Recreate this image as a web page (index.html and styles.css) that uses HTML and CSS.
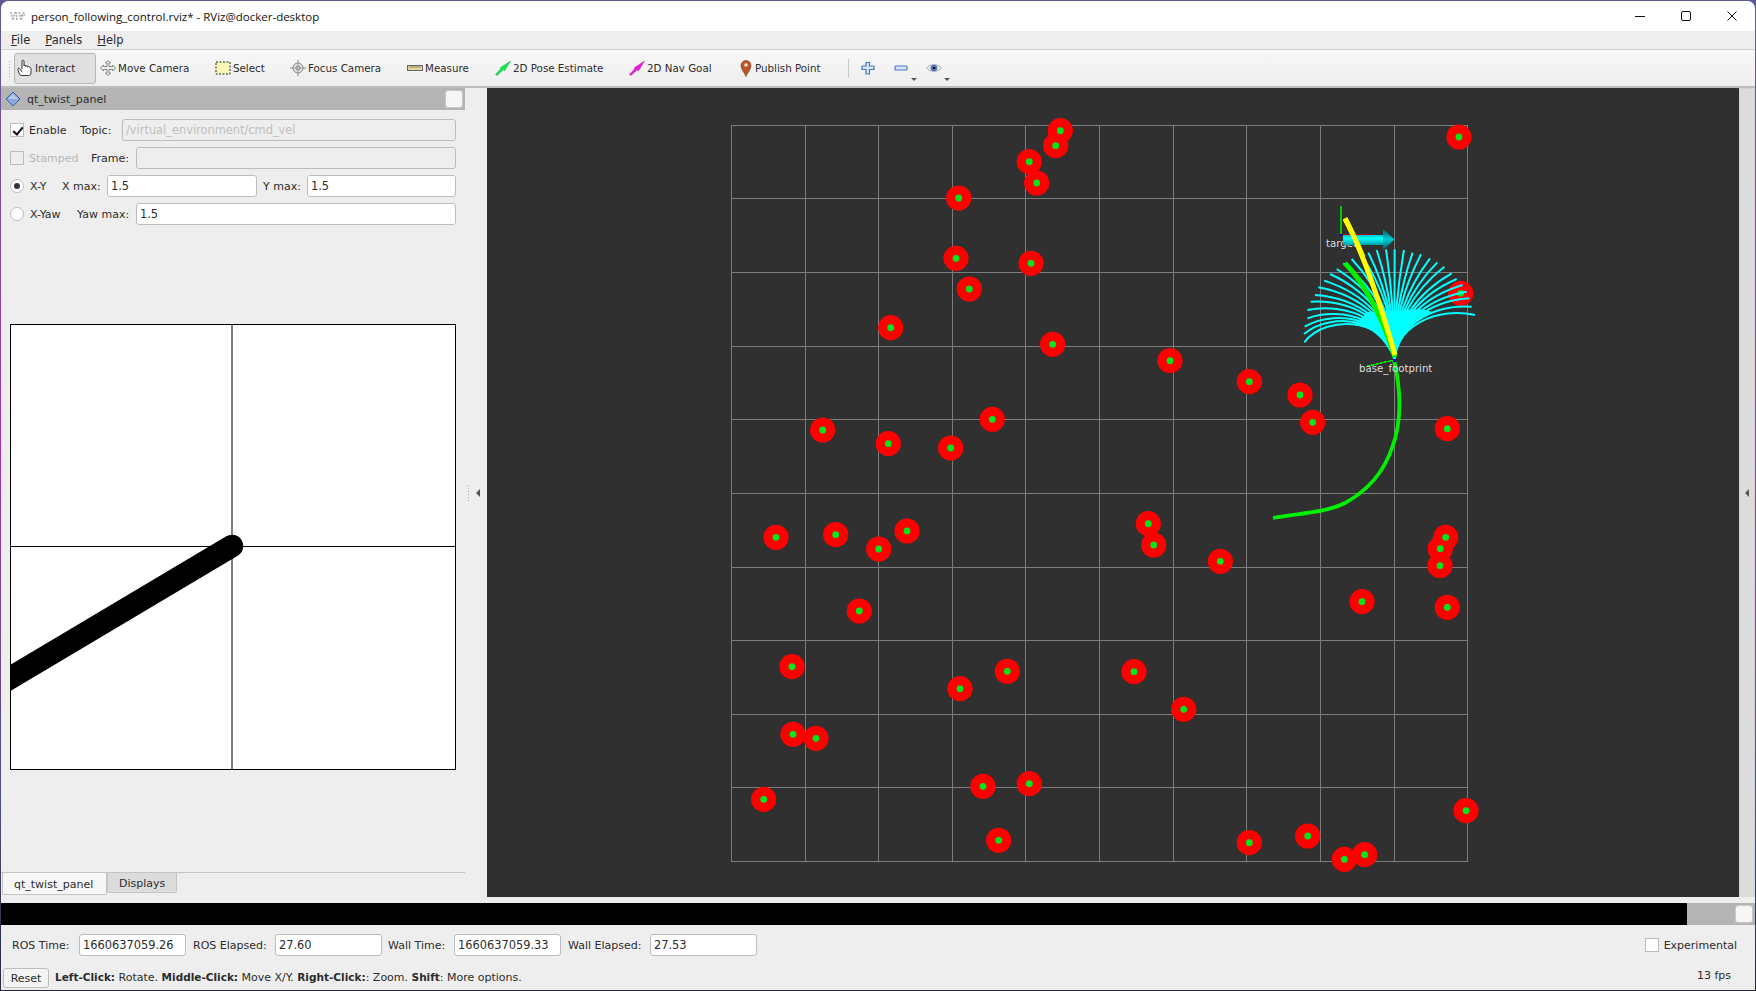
FILE: index.html
```html
<!DOCTYPE html>
<html lang="en">

<head>
    <meta charset="UTF-8">
    <title>person_following_control.rviz* - RViz@docker-desktop</title>
    <link rel="stylesheet" href="styles.css">
</head>

<body>
    <div class="window">
        <div class="titlebar">
            <svg class="app-icon" width="16" height="12" viewBox="0 0 16 12">
                <path d="M1 2l2 8 2-8M6 2l1 8M9 2l2 8 3-8M11 5h4" fill="none" stroke="#aaa" stroke-width="1.6" stroke-dasharray="2 1" />
            </svg>
            <span class="title-text">person_following_control.rviz* - RViz@docker-desktop</span>
            <div class="win-btns">
                <div class="win-btn"><svg width="12" height="12" viewBox="0 0 12 12"><path d="M1 6.5h10" stroke="#111" /></svg></div>
                <div class="win-btn"><svg width="12" height="12" viewBox="0 0 12 12"><rect x="1.5" y="1.5" width="9" height="9" rx="1.5" fill="none" stroke="#111" /></svg></div>
                <div class="win-btn"><svg width="12" height="12" viewBox="0 0 12 12"><path d="M1.5 1.5l9 9M10.5 1.5l-9 9" stroke="#111" /></svg></div>
            </div>
        </div>

        <div class="menubar">
            <span class="menu-item"><u>F</u>ile</span>
            <span class="menu-item"><u>P</u>anels</span>
            <span class="menu-item"><u>H</u>elp</span>
        </div>

        <div class="toolbar">
            <div class="grip"></div>
            <div class="tool tool-interact active">
                <svg width="16" height="18" viewBox="0 0 16 18"><path d="M5 10V2.2c0-1.4 2-1.4 2 0V7c0-1 1.8-1 1.8 0v.6c0-1 1.8-1 1.8 0v.6c0-1 1.8-1 1.8 0 .5 0 1.600.2 1.600 1.200v4.600c0 1.500-1 2.500-2.500 2.500H5c-2 0-2.500-1-3-2.500L.8 10.500c-.3-1.200 1.400-1.800 2-.6L5 13" fill="#fff" stroke="#222" stroke-width=".9" /></svg>
                <span>Interact</span>
            </div>
            <div class="tool tool-move">
                <svg width="16" height="16" viewBox="0 0 16 16"><path d="M8 .5l2.500 2.500H9v3.500h3.500V5L15.500 8l-3 3V9.500H9V13h1.500L8 15.500 5.500 13H7V9.500H3.500V11L.5 8l3-3v1.500H7V3H5.500z" fill="#eee" stroke="#777" stroke-width=".9" /></svg>
                <span>Move Camera</span>
            </div>
            <div class="tool tool-select">
                <svg width="16" height="16" viewBox="0 0 16 16"><rect x="1" y="2" width="14" height="12" fill="#fbf8b8" stroke="#222" stroke-dasharray="2 1.500" /></svg>
                <span>Select</span>
            </div>
            <div class="tool tool-focus">
                <svg width="16" height="16" viewBox="0 0 16 16"><path d="M8 0v16M0 8h16" stroke="#888" /><circle cx="8" cy="8" r="5" fill="#ddd" stroke="#888" /><circle cx="8" cy="8" r="2" fill="none" stroke="#888" /><path d="M8 3v10M3 8h10" stroke="#999" stroke-width=".7" /></svg>
                <span>Focus Camera</span>
            </div>
            <div class="tool tool-measure">
                <svg width="16" height="16" viewBox="0 0 16 16"><rect x="0.500" y="5.500" width="15" height="5" fill="#e3d99a" stroke="#666" /><path d="M3 6v2M5 6v2M7 6v2M9 6v2M11 6v2M13 6v2" stroke="#777" stroke-width=".8" /></svg>
                <span>Measure</span>
            </div>
            <div class="tool tool-pose">
                <svg width="16" height="16" viewBox="0 0 16 16"><path d="M.5 14.500L6 8.500 5 8l10.500-7L9.500 11 8.500 9.500 2 15.500z" fill="#12e84e" stroke="#0a9c30" stroke-width=".4" /></svg>
                <span>2D Pose Estimate</span>
            </div>
            <div class="tool tool-nav">
                <svg width="16" height="16" viewBox="0 0 16 16"><path d="M.5 14.500L6 8.500 5 8l10.500-7L9.500 11 8.500 9.500 2 15.500z" fill="#f018d8" stroke="#b010a0" stroke-width=".4" /></svg>
                <span>2D Nav Goal</span>
            </div>
            <div class="tool tool-point">
                <svg width="14" height="17" viewBox="0 0 14 17"><path d="M7 16.500C5.500 12.500 2 9.500 2 5.500a5 5 0 0 1 10 0c0 4-3.500 7-5 11z" fill="#b8552a" stroke="#7a3a1e" stroke-width=".6" /><circle cx="7" cy="5" r="1.800" fill="#f4e3d6" /></svg>
                <span>Publish Point</span>
            </div>
            <div class="tool-sep"></div>
            <div class="tool tool-icon tool-plus">
                <svg width="14" height="14" viewBox="0 0 14 14"><path d="M5 1.500h3.500V5H13v3.500H8.500V13H5V8.500H1V5h4z" fill="#d6e4f6" stroke="#4a7ab8" stroke-width="1.200" /></svg>
            </div>
            <div class="tool tool-icon tool-minus">
                <svg width="14" height="14" viewBox="0 0 14 14"><rect x="1" y="5" width="12" height="4" rx="1" fill="#d6e4f6" stroke="#4a7ab8" stroke-width="1.200" /></svg>
                <i class="drop"></i>
            </div>
            <div class="tool tool-icon tool-eye">
                <svg width="16" height="12" viewBox="0 0 16 12"><path d="M.5 6C3 1.500 13 1.500 15.500 6 13 10.500 3 10.500.5 6z" fill="#e4e4ea" stroke="#9a9aa8" stroke-width=".7" /><circle cx="8" cy="6" r="3.300" fill="#5578b8" /><circle cx="8" cy="6" r="1.300" fill="#111" /></svg>
                <i class="drop"></i>
            </div>
        </div>

        <div class="main">
            <div class="sidebar">
                <div class="panel-title">
                    <svg width="16" height="16" viewBox="0 0 16 16"><path d="M8 1l7 7-7 7-7-7z" fill="#8fa8dc" stroke="#3d5fa8" /><path d="M8 3L3 8h10z" fill="#b6c8ee" /></svg>
                    <span class="panel-name">qt_twist_panel</span>
                    <div class="float-btn"></div>
                </div>

                <div class="form">
                    <div class="row">
                        <div class="opt opt-enable"><i class="check checked"></i><span>Enable</span></div>
                        <label class="lbl lbl-topic">Topic:</label>
                        <div class="field disabled">/virtual_environment/cmd_vel</div>
                    </div>
                    <div class="row">
                        <div class="opt opt-stamped muted"><i class="check"></i><span>Stamped</span></div>
                        <label class="lbl lbl-frame">Frame:</label>
                        <div class="field disabled"></div>
                    </div>
                    <div class="row">
                        <div class="opt opt-xy"><i class="radio selected"></i><span>X-Y</span></div>
                        <label class="lbl lbl-xmax">X max:</label>
                        <div class="field field-xmax">1.5</div>
                        <label class="lbl lbl-ymax">Y max:</label>
                        <div class="field">1.5</div>
                    </div>
                    <div class="row">
                        <div class="opt opt-yaw"><i class="radio"></i><span>X-Yaw</span></div>
                        <label class="lbl lbl-frame-yaw">Yaw max:</label>
                        <div class="field">1.5</div>
                    </div>
                </div>

                <svg class="twist" width="446" height="446" viewBox="0 0 446 446">
                    <rect width="446" height="446" fill="#fff" />
                    <path d="M222 0v446M0 222.500h446" stroke="#000" fill="none" />
                    <path d="M222 222L-20 366" stroke="#000" stroke-width="22.500" stroke-linecap="round" />
                    <rect x="0.500" y="0.500" width="445" height="445" fill="none" stroke="#000" />
                </svg>

                <div class="tabs">
                    <div class="tab current">qt_twist_panel</div>
                    <div class="tab">Displays</div>
                </div>
            </div>

            <div class="splitter">
                <i class="dots"></i>
                <i class="arrow-left"></i>
            </div>

            <svg id="view" class="view" viewBox="487 88 1252 809" shape-rendering="crispEdges"></svg>

            <div class="right-dock"><i class="arrow-left"></i></div>
        </div>

        <div class="dockbar">
            <div class="dock-black"></div>
            <div class="dock-grey"><div class="float-btn"></div></div>
        </div>

        <div class="timebar">
            <label class="time-lbl lbl-ros">ROS Time:</label>
            <div class="field time-field">1660637059.26</div>
            <label class="time-lbl lbl-elapsed">ROS Elapsed:</label>
            <div class="field time-field">27.60</div>
            <label class="time-lbl lbl-wall">Wall Time:</label>
            <div class="field time-field">1660637059.33</div>
            <label class="time-lbl lbl-elapsed">Wall Elapsed:</label>
            <div class="field time-field">27.53</div>
            <div class="experimental"><i class="check"></i><span>Experimental</span></div>
        </div>

        <div class="statusbar">
            <div class="reset">Reset</div>
            <div class="hint"><b>Left-Click:</b> Rotate. <b>Middle-Click:</b> Move X/Y. <b>Right-Click:</b>: Zoom. <b>Shift</b>: More options.</div>
            <div class="fps">13 fps</div>
        </div>
    </div>
    <script src="script.js"></script>
</body>

</html>
```

FILE: styles.css
```css
* {
    margin: 0;
    padding: 0;
    box-sizing: border-box;
}

html,
body {
    width: 1756px;
    height: 991px;
    overflow: hidden;
}

body {
    padding: 1px;
    background: linear-gradient(#5d5a94, #a432b4 45%, #4d5288 80%, #26263a);
    font-family: "DejaVu Sans", "Liberation Sans", sans-serif;
    font-size: 11px;
    color: #2c2c2c;
}

.window {
    width: 1754px;
    height: 989px;
    display: flex;
    flex-direction: column;
    background-color: #eeeeee;
    border-radius: 8px 8px 0 0;
    overflow: hidden;
}

/* title bar */
.titlebar {
    height: 30px;
    flex: none;
    display: flex;
    align-items: center;
    background-color: #fff;
}

.app-icon {
    margin-left: 9px;
}

.title-text {
    margin-left: 5px;
    font-family: "Open Sans", "Noto Sans", sans-serif;
    font-size: 11.5px;
    color: #111;
}

.win-btns {
    margin-left: auto;
    display: flex;
}

.win-btn {
    width: 46px;
    height: 30px;
    display: flex;
    align-items: center;
    justify-content: center;
}

/* menu */
.menubar {
    height: 19px;
    flex: none;
    display: flex;
    align-items: center;
    padding-left: 10px;
    border-bottom: 1px solid #d2d2d2;
    font-size: 11.5px;
}

.menu-item {
    margin-right: 15px;
}

/* toolbar */
.toolbar {
    height: 38px;
    flex: none;
    display: flex;
    align-items: center;
    padding-left: 7px;
    background: linear-gradient(#f8f8f8, #eeeeee);
    border-bottom: 2px solid #bcbcbc;
    font-size: 10.3px;
}

.grip {
    width: 3px;
    height: 17px;
    margin-right: 3px;
    background-image: radial-gradient(#b0b0b0 40%, transparent 45%);
    background-size: 3px 3px;
}

.tool {
    height: 31px;
    flex: none;
    display: flex;
    align-items: center;
    gap: 2px;
    padding-left: 3px;
    position: relative;
}

.tool.active {
    background-color: #e0e0e0;
    border: 1px solid #b8b8b8;
    border-radius: 3px;
    padding-left: 2px;
}

.tool-interact {
    width: 82px;
    margin-right: 1px;
}

.tool-move {
    width: 115px;
}

.tool-select {
    width: 75px;
}

.tool-focus {
    width: 117px;
}

.tool-measure {
    width: 88px;
}

.tool-pose {
    width: 134px;
}

.tool-nav {
    width: 110px;
}

.tool-point {
    width: 112px;
}

.tool-sep {
    width: 1px;
    height: 19px;
    background-color: #c8c8c8;
}

.tool-plus {
    width: 33px;
    padding-left: 12px;
}

.tool-minus {
    width: 33px;
    padding-left: 12px;
}

.tool-eye {
    width: 33px;
    padding-left: 11px;
}

.drop {
    position: absolute;
    left: 29px;
    bottom: 3px;
    border-left: 3px solid transparent;
    border-right: 3px solid transparent;
    border-top: 3px solid #555;
}

/* main area */
.main {
    height: 809px;
    flex: none;
    display: flex;
}

.sidebar {
    width: 464px;
    flex: none;
    display: flex;
    flex-direction: column;
}

.panel-title {
    height: 22px;
    flex: none;
    display: flex;
    align-items: center;
    padding-left: 4px;
    padding-right: 2px;
    background-color: #b4b4b4;
}

.panel-name {
    margin-left: 6px;
    font-size: 11px;
}

.float-btn {
    width: 18px;
    height: 18px;
    margin-left: auto;
    background-color: #f6f6f6;
    border: 1px solid #c8c8c8;
    border-radius: 3px;
}

.form {
    padding: 9px 9px 0 9px;
}

.row {
    height: 22px;
    margin-bottom: 6px;
    display: flex;
    align-items: center;
}

.opt {
    flex: none;
    display: flex;
    align-items: center;
    gap: 5px;
}

.opt-enable {
    width: 70px;
}

.opt-stamped {
    width: 81px;
}

.opt-xy {
    width: 52px;
    gap: 6px;
}

.opt-yaw {
    width: 67px;
    gap: 6px;
}

.muted {
    color: #b8b8b8;
}

.lbl {
    flex: none;
}

.lbl-topic {
    width: 42px;
}

.lbl-frame {
    width: 45px;
}

.lbl-xmax {
    width: 45px;
}

.lbl-ymax {
    width: 44px;
    margin-left: 6px;
}

.lbl-frame-yaw {
    width: 59px;
}

.field {
    flex: 1;
    height: 22px;
    line-height: 20px;
    padding-left: 3px;
    background-color: #fff;
    border: 1px solid #bdbdbd;
    border-radius: 3px;
    font-size: 11.4px;
    white-space: nowrap;
}

.field.disabled {
    background-color: #eeeeee;
    color: #c0c0c0;
}

.field-xmax {
    flex: none;
    width: 150px;
}

.check,
.radio {
    flex: none;
    display: inline-block;
    width: 14px;
    height: 14px;
    background-color: #fff;
    border: 1px solid #bdbdbd;
    position: relative;
}

.opt-stamped .check {
    background-color: #eeeeee;
}

.check.checked::after {
    content: "";
    position: absolute;
    left: 4px;
    top: 1px;
    width: 4px;
    height: 8px;
    border-right: 2px solid #111;
    border-bottom: 2px solid #111;
    transform: rotate(40deg);
}

.radio {
    border-radius: 50%;
}

.radio.selected::after {
    content: "";
    position: absolute;
    left: 3px;
    top: 3px;
    width: 6px;
    height: 6px;
    border-radius: 50%;
    background-color: #333;
}

.twist {
    flex: none;
    margin: 93px 0 0 9px;
    display: block;
}

.tabs {
    flex: none;
    margin-top: auto;
    margin-bottom: 2px;
    height: 23px;
    display: flex;
    align-items: flex-start;
    border-top: 1px solid #c4c4c4;
    padding-left: 1px;
}

.tab {
    height: 20px;
    line-height: 21px;
    padding: 0 11px;
    background-color: #dcdcdc;
    border: 1px solid #c4c4c4;
    border-top: 0;
    border-radius: 0 0 2px 2px;
}

.tab.current {
    height: 22px;
    line-height: 23px;
    width: 105px;
    background-color: #f6f6f6;
    margin-right: 0;
}

.splitter {
    width: 22px;
    flex: none;
    display: flex;
    align-items: center;
    padding-left: 3px;
    gap: 7px;
}

.dots {
    width: 1px;
    height: 16px;
    background-image: linear-gradient(#aaa 50%, transparent 50%);
    background-size: 1px 3px;
}

.arrow-left {
    border-top: 4px solid transparent;
    border-bottom: 4px solid transparent;
    border-right: 4px solid #555;
}

.view {
    width: 1252px;
    height: 809px;
    flex: none;
    display: block;
    background-color: #303030;
}

.right-dock {
    flex: 1;
    display: flex;
    align-items: center;
    justify-content: center;
    padding-right: 1px;
    background-color: #dcdcdc;
    border-radius: 2px;
    border: 1px solid #d2d2d2;
    border-bottom: 0;
}

/* bottom dock */
.dockbar {
    height: 22px;
    flex: none;
    margin-top: 6px;
    display: flex;
}

.dock-black {
    flex: 1;
    background-color: #000;
}

.dock-grey {
    width: 68px;
    flex: none;
    display: flex;
    align-items: center;
    padding-right: 2px;
    background-color: #b4b4b4;
}

.timebar {
    height: 40px;
    flex: none;
    display: flex;
    align-items: center;
    padding-left: 11px;
    padding-right: 18px;
}

.time-lbl {
    flex: none;
}

.lbl-ros {
    width: 67px;
}

.lbl-elapsed {
    width: 82px;
    margin-left: 7px;
}

.lbl-wall {
    width: 66px;
    margin-left: 6px;
}

.time-field {
    flex: none;
    width: 107px;
}

.experimental {
    margin-left: auto;
    display: flex;
    align-items: center;
    gap: 5px;
}

.statusbar {
    height: 24px;
    flex: none;
    display: flex;
    align-items: center;
    padding-left: 2px;
    padding-right: 24px;
    padding-top: 1px;
}

.reset {
    width: 46px;
    height: 20px;
    line-height: 19px;
    text-align: center;
    background-color: #f4f4f4;
    border: 1px solid #bdbdbd;
    border-radius: 3px;
}

.hint {
    margin-left: 6px;
}

.hint b {
    font-size: 10.5px;
}

.fps {
    margin-left: auto;
    margin-top: -5px;
}
```

FILE: script.js
```js
var svgNS = 'http://www.w3.org/2000/svg';
var view = document.getElementById('view');

function add(tag, attrs, parent) {
    var node = document.createElementNS(svgNS, tag);
    for (var key in attrs) {
        node.setAttribute(key, attrs[key]);
    }
    (parent || view).appendChild(node);
    return node;
}

// grid
var gridX = [731, 805, 878, 952, 1025, 1099, 1173, 1246, 1320, 1394, 1467];
var gridY = [125, 198, 272, 346, 419, 493, 567, 640, 714, 787, 861];
gridX.forEach(function (x) {
    add('line', { x1: x + 0.5, y1: 125, x2: x + 0.5, y2: 862, stroke: '#7c7c7c' });
});
gridY.forEach(function (y) {
    add('line', { x1: 731, y1: y + 0.5, x2: 1468, y2: y + 0.5, stroke: '#7c7c7c' });
});

// obstacles
var points = [
    [1060.3, 130.7], [1055.7, 145.7], [1029.3, 161.7], [1036.7, 183], [958.7, 198],
    [956, 258.3], [1031, 263.3], [969.3, 289], [890.7, 327.7], [1052.7, 344.3],
    [992.3, 419.3], [822.7, 430], [888.3, 443.7], [950.7, 448],
    [1459, 137], [1460.7, 293.3], [1170, 360.7], [1249.3, 381.7], [1300, 395],
    [1312.7, 422.3], [1447.3, 428.7],
    [776, 537.3], [835.7, 534.7], [878.7, 549], [907, 531], [859.3, 611],
    [792, 666.7], [1007.3, 671.3], [960, 688.7], [793, 734.3], [816, 738.3],
    [763.7, 799.3], [983, 786.3], [1029.3, 783.7], [998.7, 840.3],
    [1148.3, 523.7], [1153.7, 545], [1220.3, 561.3], [1445.7, 537.3], [1440.3, 548.7],
    [1440, 565.7], [1362, 601.7], [1447.3, 607.3], [1134, 671.7], [1183.7, 709.3],
    [1466, 810.7], [1307.7, 836], [1249.3, 842.7], [1364.7, 854.7], [1344.3, 859.3]
];
points.forEach(function (p) {
    add('circle', { cx: p[0], cy: p[1], r: 12.6, fill: '#ff0000', 'shape-rendering': 'auto' });
});
points.forEach(function (p) {
    add('circle', { cx: p[0], cy: p[1], r: 3.4, fill: '#00e81a', 'shape-rendering': 'auto' });
});

// candidate trajectories, every one is a flattened arc from the base to its tip
var baseX = 1394.3;
var baseY = 360;
var flatten = 0.75;
var tips = [
    [613, 697], [612, 672], [614, 650], [622, 625], [622, 600], [632, 575], [645, 555],
    [655, 532], [672, 512], [690, 492], [710, 477], [730, 460], [755, 447], [782, 432],
    [805, 428], [830, 420], [858, 418], [884, 418], [912, 420], [938, 428], [963, 433],
    [990, 445], [1012, 457], [1033, 470], [1055, 490], [1070, 507], [1088, 525],
    [1100, 545], [1108, 565], [1115, 590], [1125, 615]
];
var fan = add('g', { fill: 'none', stroke: '#00ffff', 'stroke-width': 2, 'shape-rendering': 'auto' });
add('path', {
    d: 'M1394 360C1386 340 1372 326 1353 325L1368 312L1420 309L1433 312C1416 318 1402 335 1397 352Z',
    fill: '#00ffff', stroke: 'none'
}, fan);
tips.forEach(function (t) {
    var x = 1100 + t[0] / 3;
    var y = 110 + t[1] / 3;
    var dx = x - baseX;
    var dy = (y - baseY) / flatten;
    var d;
    if (Math.abs(dx) < 1) {
        d = 'M' + baseX + ' ' + baseY + 'L' + x + ' ' + y;
    } else {
        var rx = (dx * dx + dy * dy) / (2 * Math.abs(dx));
        d = 'M' + baseX + ' ' + baseY + 'A' + rx + ' ' + (rx * flatten) + ' 0 0 ' + (dx > 0 ? 1 : 0) + ' ' + x + ' ' + y;
    }
    add('path', { d: d }, fan);
});

// best trajectories and driven path
add('path', {
    d: 'M1345 263.300C1363 281 1382 316 1395 357',
    fill: 'none', stroke: '#00f000', 'stroke-width': 5, 'shape-rendering': 'auto'
});
add('path', {
    d: 'M1345 218.300C1363 253 1381 306 1395 355',
    fill: 'none', stroke: '#ffff00', 'stroke-width': 5, 'shape-rendering': 'auto'
});
add('path', {
    d: 'M1394 360C1400 385 1403 420 1392 448C1383 474 1365 492 1345 503C1325 513 1300 513 1273 518',
    fill: 'none', stroke: '#00f000', 'stroke-width': 3.8, 'shape-rendering': 'auto'
});

// frames
var labelAttrs = { fill: '#dddddd', 'font-size': 10.2, 'shape-rendering': 'auto' };
labelAttrs.x = 1326;
labelAttrs.y = 247;
add('text', labelAttrs).textContent = 'target';
add('line', { x1: 1341, y1: 206, x2: 1341, y2: 235, stroke: '#00c800', 'stroke-width': 2 });
add('line', { x1: 1341, y1: 234.5, x2: 1371, y2: 234.5, stroke: '#b00000', 'stroke-width': 1.5 });
add('rect', { x: 1340, y: 234, width: 2, height: 2, fill: '#0000e0' });

var defs = add('defs', {});
var grad = add('linearGradient', { id: 'shaft', x1: 0, y1: 0, x2: 0, y2: 1 }, defs);
add('stop', { offset: '0', 'stop-color': '#00c8cc' }, grad);
add('stop', { offset: '.35', 'stop-color': '#00ffff' }, grad);
add('stop', { offset: '1', 'stop-color': '#009ea6' }, grad);
var headGrad = add('linearGradient', { id: 'head', x1: 0, y1: 0, x2: 0, y2: 1 }, defs);
add('stop', { offset: '0', 'stop-color': '#005f68' }, headGrad);
add('stop', { offset: '.5', 'stop-color': '#00c8d0' }, headGrad);
add('stop', { offset: '1', 'stop-color': '#005f68' }, headGrad);
add('rect', { x: 1343, y: 235, width: 40, height: 10, fill: 'url(#shaft)' });
add('path', { d: 'M1383 229L1394.500 239.500L1383 250Z', fill: 'url(#head)', 'shape-rendering': 'auto' });

// the yellow line runs in front of the arrow
add('path', {
    d: 'M1345 218.300C1351 230 1357 242 1363 257',
    fill: 'none', stroke: '#ffff00', 'stroke-width': 5, 'shape-rendering': 'auto'
});

add('line', { x1: 1394, y1: 360, x2: 1366, y2: 366.5, stroke: '#00e000', 'stroke-width': 1.5 });
add('rect', { x: 1393, y: 359, width: 3, height: 3, fill: '#0000e0' });
labelAttrs.x = 1359;
labelAttrs.y = 372;
add('text', labelAttrs).textContent = 'base_footprint';
```
